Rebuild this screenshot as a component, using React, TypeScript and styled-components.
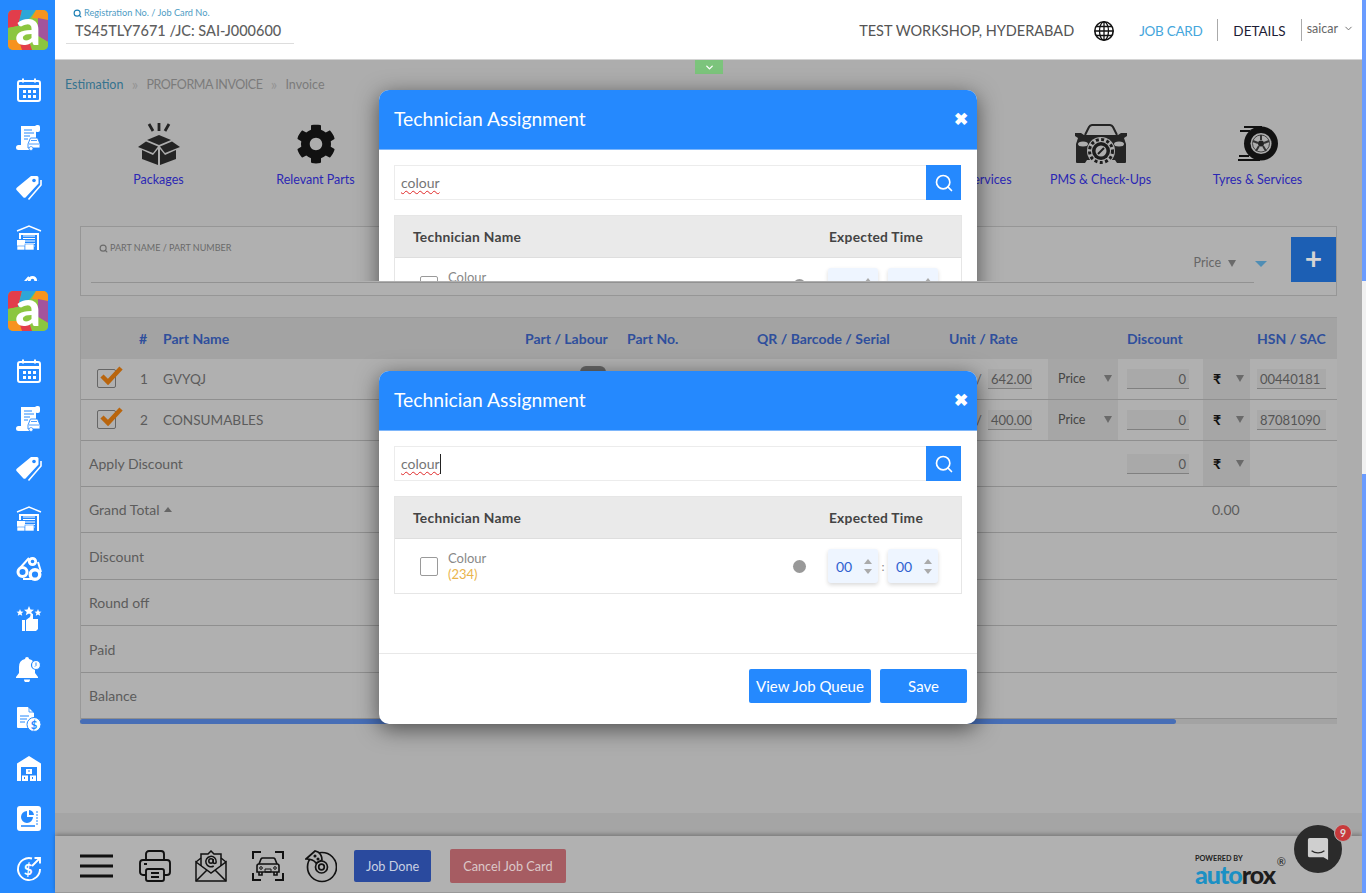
import React from 'react'
import styled, { createGlobalStyle } from 'styled-components'
import { FaCog } from 'react-icons/fa'
import { FiSearch, FiChevronDown } from 'react-icons/fi'

const BLUE = '#2589fe'

const GlobalStyle = createGlobalStyle`
  html, body {
    margin: 0;
    padding: 0;
    height: 893px;
    overflow: hidden;
    background: #adadad;
    font-family: Lato, 'Noto Sans', sans-serif;
  }
  * {
    box-sizing: border-box;
  }
`

const Page = styled.div`
  position: relative;
  display: flex;
  width: 1366px;
  height: 893px;
  overflow: hidden;
`

/* left rail */
const Sidebar = styled.aside`
  width: 55px;
  flex-shrink: 0;
  background: ${BLUE};
  display: flex;
  flex-direction: column;
`

const RailPart = styled.div<{ $height: number }>`
  height: ${({ $height }) => $height}px;
  overflow: hidden;
  padding: 10px 0 0 8px;
`

const RailLogo = styled.div`
  width: 40px;
  height: 40px;
  margin-bottom: 16px;
  border-radius: 5px;
  overflow: hidden;
`

const RailItem = styled.div`
  width: 40px;
  height: 50px;
  margin-left: 1px;
  display: flex;
  align-items: center;
  justify-content: center;
  &:nth-of-type(2) {
    height: 47px;
  }
`

/* main column */
const Main = styled.div`
  flex: 1;
  display: flex;
  flex-direction: column;
  min-width: 0;
`

const Header = styled.header`
  height: 60px;
  flex-shrink: 0;
  background: #fff;
  border-bottom: 1px solid #d4d4d4;
  display: flex;
  align-items: center;
  justify-content: space-between;
  padding: 0 8px 0 11px;
`

const RegBox = styled.div`
  width: 228px;
  height: 36px;
  margin-top: -7px;
  border-bottom: 1px solid #ddd;
`

const RegLabel = styled.div`
  display: flex;
  align-items: center;
  gap: 2px;
  padding-left: 7px;
  font-size: 9.2px;
  line-height: 14px;
  margin-top: -2px;
  color: #4e9cc4;
  white-space: nowrap;
  svg {
    color: #1c7fb4;
    stroke-width: 3;
  }
`

const RegValue = styled.div`
  padding-left: 9px;
  margin-top: 1px;
  font-size: 14.5px;
  line-height: 20px;
  font-weight: 500;
  color: #5f5f5f;
  white-space: nowrap;
`

const HeaderRight = styled.div`
  display: flex;
  align-items: center;
  padding-top: 2px;
`

const Workshop = styled.span`
  font-size: 14.5px;
  color: #555;
  margin-right: 20px;
`

const NavLink = styled.span<{ $active?: boolean }>`
  font-size: 13.5px;
  margin-left: ${({ $active }) => ($active ? 25 : 0)}px;
  letter-spacing: ${({ $active }) => ($active ? -0.3 : 0)}px;
  color: ${({ $active }) => ($active ? '#45a6dc' : '#1d1d35')};
`

const NavDivider = styled.span`
  width: 1px;
  height: 22px;
  background: #aaa;
  margin: -2px 15px 0;
`

const UserName = styled.span`
  display: flex;
  align-items: center;
  gap: 5px;
  font-size: 12.5px;
  color: #666;
  margin-left: -10px;
  margin-top: -5px;
`

const GreenTab = styled.div`
  position: absolute;
  top: 60px;
  left: 695px;
  width: 28px;
  height: 14px;
  background: #7cc47c;
  color: #fff;
  display: flex;
  align-items: center;
  justify-content: center;
`

const Content = styled.main`
  flex: 1;
  padding: 0 25px;
  background: #adadad;
`

const Breadcrumb = styled.nav`
  height: 48px;
  margin-left: -15px;
  display: flex;
  align-items: center;
  font-size: 12.5px;
  color: #7b7b7b;
`

const Crumb = styled.span<{ $link?: boolean; $tight?: boolean }>`
  color: ${({ $link }) => ($link ? '#35738f' : '#7b7b7b')};
  letter-spacing: ${({ $tight }) => ($tight ? -0.45 : 0)}px;
`

const CrumbSep = styled.span`
  width: 23px;
  text-align: center;
  color: #949494;
  font-size: 15px;
  line-height: 14px;
`

const Categories = styled.div`
  margin-top: 15px;
  display: grid;
  grid-template-columns: repeat(8, 157px);
  height: 65px;
`

const Category = styled.div`
  display: flex;
  flex-direction: column;
  align-items: center;
`

const CategoryIcon = styled.div`
  height: 42px;
  display: flex;
  align-items: center;
  justify-content: center;
`

const CategoryLabel = styled.div`
  margin-top: 6px;
  font-size: 12.5px;
  line-height: 18px;
  color: #2b27b4;
  white-space: nowrap;
`

const SearchCard = styled.section`
  margin-top: 38px;
  height: 70px;
  border: 1px solid #969696;
  padding: 10px 0 0 10px;
  display: flex;
  align-items: flex-start;
  background: #b0b0b0;
`

const PartField = styled.div`
  width: 1163px;
  flex-shrink: 0;
  height: 46px;
  border-bottom: 1px solid #929292;
  padding: 5px 0 0 8px;
`

const PartLabel = styled.div`
  display: flex;
  align-items: center;
  gap: 2px;
  font-size: 9px;
  line-height: 12px;
  color: #6a6a6a;
  svg {
    stroke-width: 3;
  }
`

const PriceRow = styled.div`
  display: flex;
  align-items: center;
  justify-content: flex-end;
  gap: 7px;
  margin-top: 1px;
  padding-right: 18px;
  font-size: 12.5px;
  line-height: 16px;
  color: #666;
`

const Triangle = styled.span<{ $color?: string; $up?: boolean; $small?: boolean }>`
  display: inline-block;
  width: 0;
  height: 0;
  border-left: 4px solid transparent;
  border-right: 4px solid transparent;
  ${({ $up, $small, $color }) =>
    $up
      ? `border-bottom: 5px solid ${$color || '#666'};`
      : `border-top: ${$small ? 5 : 7}px solid ${$color || '#6a6a6a'};`}
`

const BlueCaret = styled.span`
  width: 0;
  height: 0;
  margin: 24px 0 0 1px;
  border-left: 6px solid transparent;
  border-right: 6px solid transparent;
  border-top: 6px solid #4f8db4;
`

const PlusButton = styled.div`
  margin-left: auto;
  width: 45px;
  height: 45px;
  background: #1c5fb4;
  color: #d4d4d4;
  font-size: 30px;
  font-weight: 700;
  line-height: 42px;
  text-align: center;
`

const Table = styled.section`
  margin-top: 21px;
  border-left: 1px solid #999;
  background: #b0b0b0;
`

const COLUMNS = '58px 24px 362px 102px 130px 192px 99px 70px 85px 47px 87px'

const HeadRow = styled.div`
  display: grid;
  grid-template-columns: ${COLUMNS};
  height: 42px;
  padding-bottom: 1px;
  align-items: center;
  background: #a3a3a3;
  border-top: 1px solid #9b9b9b;
  font-size: 14px;
  font-weight: 700;
  color: #2f4f9c;
  white-space: nowrap;
`

const HeadCell = styled.div<{ $pad?: number }>`
  padding-left: ${({ $pad }) => $pad || 0}px;
`

const Row = styled.div<{ $height: number }>`
  display: grid;
  grid-template-columns: ${COLUMNS};
  height: ${({ $height }) => $height}px;
  border-bottom: 1px solid #8f8f8f;
  font-size: 14px;
  color: #5c5c5c;
`

const Cell = styled.div<{ $pad?: number; $end?: boolean; $span?: string }>`
  display: flex;
  align-items: center;
  padding-left: ${({ $pad }) => $pad || 0}px;
  justify-content: ${({ $end }) => ($end ? 'flex-end' : 'flex-start')};
  ${({ $span }) => ($span ? `grid-column: ${$span};` : '')}
`

const PartName = styled(Cell)`
  font-size: 13.6px;
`

const SelectCell = styled(Cell)`
  background: #a6a6a6;
  justify-content: space-between;
  padding-right: 6px;
  padding-bottom: 1px;
  font-size: 12.5px;
  color: #444;
`

const Rupee = styled.span`
  font-size: 14px;
  font-weight: 700;
  color: #111;
`

const CheckBox = styled.div`
  position: relative;
  width: 19px;
  height: 19px;
  margin: -1px 0 0 16px;
  border: 1px solid #666;
  border-radius: 2px;
  svg {
    position: absolute;
    left: 2px;
    top: -5px;
  }
`

const RateWrap = styled(Cell)`
  justify-content: flex-end;
  padding-right: 16px;
  gap: 6px;
  font-size: 13px;
`

const UnderInput = styled.div<{ $width: number; $right?: boolean }>`
  width: ${({ $width }) => $width}px;
  height: 20px;
  background: #a9a9a9;
  border-bottom: 1px solid #808080;
  padding: 0 3px;
  line-height: 20px;
  font-size: 13px;
  color: #555;
  text-align: ${({ $right }) => ($right ? 'right' : 'left')};
`

const ToggleBlob = styled.div`
  width: 26px;
  height: 6px;
  margin: 7px 0 0 55px;
  background: #666;
  border-radius: 13px 13px 0 0;
`

const TotalLabel = styled(Cell)`
  padding-left: 8px;
  gap: 4px;
`

const ScrollTrack = styled.div`
  height: 5px;
  background: #a3a3a3;
`

const ScrollThumb = styled.div`
  width: 1096px;
  height: 5px;
  border-radius: 3px;
  background: #476eb6;
`

const Band = styled.div`
  height: 23px;
  flex-shrink: 0;
  background: #a5a5a5;
`

const Footer = styled.footer`
  height: 57px;
  flex-shrink: 0;
  background: #b1b1b1;
  border-bottom: 1px solid #999;
  box-shadow: 0 -2px 4px rgba(0, 0, 0, 0.25);
  display: flex;
  align-items: center;
  padding: 4px 26px 0 25px;
`

const FooterIcon = styled.div<{ $gap: number }>`
  margin-right: ${({ $gap }) => $gap}px;
  display: flex;
`

const FooterButton = styled.div<{ $danger?: boolean }>`
  height: ${({ $danger }) => ($danger ? 34 : 32)}px;
  padding: 0 ${({ $danger }) => ($danger ? 13 : 12)}px;
  margin-right: 19px;
  border-radius: 2px;
  background: ${({ $danger }) => ($danger ? '#a65c62' : '#2a4a9e')};
  color: ${({ $danger }) => ($danger ? '#dcc8c8' : '#c9d0e2')};
  font-size: 12.7px;
  display: flex;
  align-items: center;
  white-space: nowrap;
`

const Powered = styled.div`
  margin-left: auto;
  margin-top: 7px;
  margin-right: 61px;
  position: relative;
  color: #222;
`

const PoweredBy = styled.div`
  font-size: 7.3px;
  line-height: 9px;
  font-weight: 700;
`

const Brand = styled.div`
  font-size: 25px;
  line-height: 23px;
  font-weight: 900;
  letter-spacing: -1px;
  color: #1d1d1d;
`

const BrandBlue = styled.span`
  color: #1b90c4;
`

const Registered = styled.span`
  position: absolute;
  right: -11px;
  top: 1px;
  font-size: 11px;
`

const ChatBubble = styled.div`
  position: absolute;
  left: 1294px;
  top: 825px;
  width: 48px;
  height: 48px;
  border-radius: 50%;
  background: #2b2b2b;
  display: flex;
  align-items: center;
  justify-content: center;
`

const ChatBadge = styled.div`
  position: absolute;
  left: 40px;
  top: -1px;
  width: 18px;
  height: 18px;
  border-radius: 50%;
  border: 1px solid #b1b1b1;
  background: #c83a3c;
  color: #ddd;
  font-size: 10.5px;
  font-weight: 700;
  line-height: 16px;
  text-align: center;
`

const Scrollbar = styled.div`
  width: 4px;
  flex-shrink: 0;
  display: flex;
  flex-direction: column;
`

const ScrollPart = styled.div<{ $height?: number; $light?: boolean }>`
  height: ${({ $height }) => ($height ? `${$height}px` : 'auto')};
  flex: ${({ $height }) => ($height ? 'none' : 1)};
  background: ${({ $light }) => ($light ? '#f1f1f1' : '#6a9cff')};
`

/* dialog */
const TopClip = styled.div`
  position: absolute;
  left: 0;
  top: 0;
  width: 1366px;
  height: 281px;
  overflow: hidden;
`

const Modal = styled.div<{ $top: number }>`
  position: absolute;
  left: 379px;
  top: ${({ $top }) => $top}px;
  width: 598px;
  height: 353px;
  background: #fff;
  border-radius: 10px;
  box-shadow: 0 5px 22px rgba(0, 0, 0, 0.55);
  overflow: hidden;
  display: flex;
  flex-direction: column;
`

const ModalHead = styled.div`
  height: 60px;
  flex-shrink: 0;
  background: ${BLUE};
  border-bottom: 1px solid #7db6fb;
  display: flex;
  align-items: center;
  justify-content: space-between;
  padding: 0 9px 3px 15px;
  color: #fff;
`

const ModalTitle = styled.div`
  font-size: 19.3px;
`

const CloseX = styled.span`
  font-size: 17px;
  font-weight: 900;
`

const ModalBody = styled.div`
  height: 222px;
  flex-shrink: 0;
  padding: 15px 16px 0 15px;
`

const SearchBar = styled.div`
  display: flex;
  height: 35px;
  border: 1px solid #ececec;
  padding-left: 6px;
  align-items: center;
  justify-content: space-between;
`

const SearchText = styled.span<{ $caret?: boolean }>`
  font-size: 14px;
  line-height: 20px;
  color: #757575;
  text-decoration: underline wavy #e02828 1px;
  text-underline-offset: 2px;
  ${({ $caret }) => ($caret ? 'border-right: 1px solid #222;' : '')}
`

const SearchButton = styled.div`
  width: 35px;
  height: 35px;
  margin-right: -1px;
  background: ${BLUE};
  color: #fff;
  display: flex;
  align-items: center;
  justify-content: center;
`

const TechTable = styled.div`
  margin: 15px -1px 0 0;
  border: 1px solid #e6e6e6;
`

const TechHead = styled.div`
  height: 42px;
  padding: 0 38px 0 18px;
  background: #eaeaea;
  border-bottom: 1px solid #dedede;
  display: flex;
  align-items: center;
  justify-content: space-between;
  font-size: 13.8px;
  font-weight: 700;
  letter-spacing: 0.25px;
  color: #444;
`

const TechRow = styled.div`
  height: 54px;
  display: flex;
  align-items: center;
  padding-left: 25px;
`

const TechCheck = styled.div`
  width: 18px;
  height: 19px;
  border: 1px solid #9a9a9a;
  border-radius: 2px;
  margin-right: 10px;
`

const TechName = styled.div`
  flex: 1;
  font-size: 13px;
  line-height: 16px;
  color: #888;
`

const TechCode = styled.div`
  color: #e9b44c;
`

const StatusDot = styled.span`
  width: 13px;
  height: 13px;
  border-radius: 50%;
  background: #999;
  margin-right: 22px;
`

const TimeBox = styled.div`
  width: 50px;
  height: 34px;
  background: #eef5ff;
  border-radius: 3px;
  box-shadow: 0 2px 4px rgba(0, 0, 0, 0.15);
  display: flex;
  align-items: center;
  justify-content: space-between;
  padding: 0 6px 0 8px;
  font-size: 14px;
  color: #2f62d0;
`

const Spin = styled.div`
  display: flex;
  flex-direction: column;
  gap: 5px;
`

const TimeColon = styled.span`
  width: 10px;
  text-align: center;
  font-size: 12px;
  color: #888;
`

const TimeEnd = styled.div`
  width: 23px;
`

const ModalFoot = styled.div`
  flex: 1;
  border-top: 1px solid #e8e8e8;
  display: flex;
  justify-content: flex-end;
  align-items: flex-start;
  gap: 9px;
  padding: 15px 10px 0 0;
`

const ModalButton = styled.div<{ $width: number }>`
  width: ${({ $width }) => $width}px;
  height: 34px;
  background: ${BLUE};
  border-radius: 2px;
  color: #fff;
  font-size: 15px;
  display: flex;
  align-items: center;
  justify-content: center;
`

/* drawings */
const AppLogo = () => (
  <svg width="40" height="40" viewBox="0 0 40 40">
    <rect width="40" height="40" fill="#8cc63f" />
    <polygon points="0,0 14,0 10,16 0,18" fill="#e23d4b" />
    <polygon points="14,0 28,0 22,8 10,16" fill="#2da6d8" />
    <polygon points="28,0 40,0 40,10 24,8" fill="#f7941d" />
    <polygon points="30,8 40,10 40,32 30,26" fill="#a3549c" />
    <polygon points="30,26 40,32 40,40 22,40" fill="#8cc63f" />
    <polygon points="0,18 10,16 12,30 0,30" fill="#8cc63f" />
    <polygon points="0,30 12,30 16,40 0,40" fill="#f7931e" />
    <polygon points="12,34 22,34 24,40 14,40" fill="#e23d4b" />
    <text x="20" y="35" textAnchor="middle" fontFamily="Lato" fontWeight="900" fontSize="50" fill="#fff">a</text>
  </svg>
)

const CalendarIcon = () => (
  <svg width="26" height="26" viewBox="0 0 26 26" fill="none" stroke="#fff" strokeWidth="2">
    <rect x="2" y="4" width="22" height="20" rx="2" />
    <path d="M2 9.500h22" strokeWidth="3" />
    <path d="M7 1.500v4M19 1.500v4" />
    <g fill="#fff" stroke="none">
      <rect x="7" y="13" width="3" height="3" /><rect x="12" y="13" width="3" height="3" /><rect x="17" y="13" width="3" height="3" />
      <rect x="7" y="18" width="3" height="3" /><rect x="12" y="18" width="3" height="3" /><rect x="17" y="18" width="3" height="3" />
    </g>
  </svg>
)

const InvoiceIcon = () => (
  <svg width="26" height="26" viewBox="0 0 26 26">
    <path d="M5 1h15v21H5z" fill="#fff" />
    <rect x="19" y="0" width="5" height="7" rx="2" fill="#fff" />
    <rect x="0" y="20" width="15" height="5" rx="2.500" fill="#fff" />
    <path d="M8 5h8M8 8h10M8 11h6M8 14h4" stroke={BLUE} strokeWidth="1" />
    <path d="M12 19l2-5a1 1 0 0 1 1-1h6a1 1 0 0 1 1 1l2 5v4H12z" fill="#fff" stroke={BLUE} strokeWidth=".9" />
    <path d="M13 19h10M15 15.500h6" stroke={BLUE} strokeWidth=".8" />
    <circle cx="15" cy="23.500" r="2" fill="#fff" stroke={BLUE} strokeWidth=".7" />
  </svg>
)

const TagIcon = () => (
  <svg width="26" height="26" viewBox="0 0 26 26">
    <path d="M15 1h6a1.500 1.500 0 0 1 1.500 1.500v6L10 22a2 2 0 0 1-3 0L1 15.500a2 2 0 0 1 0-3z" fill="#fff" />
    <circle cx="18" cy="5.500" r="1.800" fill={BLUE} />
    <path d="M25 5v5L12.500 24.500" stroke="#fff" strokeWidth="1.600" fill="none" />
  </svg>
)

const WarehouseIcon = () => (
  <svg width="26" height="26" viewBox="0 0 26 26">
    <path d="M1 6l12-5 12 5" stroke="#fff" strokeWidth="1.400" fill="none" />
    <path d="M3 8h20v17h-2V10H5v4H3z" fill="#fff" />
    <path d="M7 11h12M7 13.500h12M7 16h12M7 18.500h12M7 21h12" stroke="#fff" strokeWidth="1" />
    <rect x="1" y="15" width="8" height="6" fill="#fff" />
    <rect x="1" y="21" width="8" height="4" fill="#fff" stroke={BLUE} strokeWidth=".6" />
    <rect x="9" y="19" width="9" height="6" fill="#fff" stroke={BLUE} strokeWidth=".6" />
  </svg>
)

const BeltIcon = () => (
  <svg width="26" height="26" viewBox="0 0 26 26" fill="none">
    <path d="M4 12L13 2M22 6l3 10M7 23h12" stroke="#fff" strokeWidth="2" />
    <circle cx="6.500" cy="16" r="4.500" stroke="#fff" strokeWidth="3" />
    <circle cx="19" cy="18.500" r="4.800" stroke="#fff" strokeWidth="3.400" />
    <circle cx="16.500" cy="5.500" r="3.200" stroke="#fff" strokeWidth="2.800" />
  </svg>
)

const ThumbIcon = () => (
  <svg width="26" height="26" viewBox="0 0 26 26" fill="#fff">
    <polygon points="13,0 14.500,3.500 18,3.800 15.300,6 16.200,9.300 13,7.500 9.800,9.300 10.700,6 8,3.800 11.500,3.500" />
    <polygon points="4,3 5,5.500 7.500,5.700 5.600,7.300 6.200,9.700 4,8.400 1.800,9.700 2.400,7.300 .5,5.700 3,5.500" />
    <polygon points="22,3 23,5.500 25.500,5.700 23.600,7.300 24.200,9.700 22,8.400 19.800,9.700 20.400,7.300 18.500,5.700 21,5.500" />
    <rect x="6" y="14" width="3" height="11" />
    <path d="M10 14l4-3 1-4 2 1v5h5v10l-2 2H10z" />
  </svg>
)

const BellIcon = () => (
  <svg width="26" height="26" viewBox="0 0 26 26">
    <path d="M11 1a2 2 0 0 1 2 2 8 8 0 0 1 6 8v6l3 4v1H0v-1l3-4v-6a8 8 0 0 1 6-8 2 2 0 0 1 2-2z" fill="#fff" />
    <path d="M8 23.500a3 3 0 0 0 6 0" fill="#fff" />
    <circle cx="20" cy="9" r="4.500" fill="#fff" stroke={BLUE} strokeWidth="1.200" />
    <path d="M20 6.500v3l-1 1" stroke={BLUE} strokeWidth="1" fill="none" />
  </svg>
)

const BillIcon = () => (
  <svg width="26" height="26" viewBox="0 0 26 26">
    <path d="M1 2a1 1 0 0 1 1-1h10l6 6v14a1 1 0 0 1-1 1H2a1 1 0 0 1-1-1z" fill="#fff" />
    <path d="M13 1v5h5" stroke={BLUE} strokeWidth=".8" fill="none" />
    <path d="M4 10h9M4 13h7M4 16h5" stroke={BLUE} strokeWidth="1" />
    <circle cx="18" cy="18.500" r="7" fill="#fff" stroke={BLUE} />
    <text x="18" y="22.500" textAnchor="middle" fontSize="11" fontWeight="700" fontFamily="Lato" fill={BLUE}>$</text>
  </svg>
)

const StoreIcon = () => (
  <svg width="26" height="26" viewBox="0 0 26 26">
    <path d="M13 0l12 7.500V25H1V7.500z" fill="#fff" />
    <rect x="5" y="11" width="16" height="14" fill={BLUE} />
    <rect x="10" y="13" width="6" height="5" fill="#fff" />
    <rect x="6" y="19.500" width="6" height="5.500" fill="#fff" />
    <rect x="14" y="19.500" width="6" height="5.500" fill="#fff" />
    <path d="M13 14v2M8.500 21v2M16.500 21v2" stroke={BLUE} />
  </svg>
)

const ReportIcon = () => (
  <svg width="26" height="26" viewBox="0 0 26 26">
    <rect x="1" y="0" width="24" height="25" rx="3" fill="#fff" />
    <path d="M11 5a6 6 0 1 0 6 6h-6z" fill={BLUE} />
    <path d="M13 4a6 6 0 0 1 5 5h-5z" fill={BLUE} />
    <path d="M5 20h14" stroke={BLUE} strokeWidth="1.600" />
    <path d="M20 6h2M20 9h2M20 12h2M20 15h2M20 18h2" stroke={BLUE} />
  </svg>
)

const MoneyIcon = () => (
  <svg width="26" height="26" viewBox="0 0 26 26" fill="none" stroke="#fff" strokeWidth="1.900">
    <path d="M16 2.500A11 11 0 1 0 24 13" />
    <path d="M16 10l8-8M18.500 2H24v5.500" />
    <text x="12" y="18.500" textAnchor="middle" fontSize="15" fontWeight="700" fontFamily="Lato" fill="#fff" stroke="none">$</text>
  </svg>
)

const PackageIcon = () => (
  <svg width="42" height="42" viewBox="0 0 42 42" fill="#242424">
    <path d="M11 1l4 7M21 0v8M31 1l-4 7" stroke="#242424" strokeWidth="2.800" fill="none" />
    <polygon points="21,12 33,17 21,22 9,17" />
    <polygon points="8,18.500 20,23.500 15,30 0,24" />
    <polygon points="34,18.500 22,23.500 27,30 42,24" />
    <polygon points="4,27 15,32 20,26 20,42 4,36" />
    <polygon points="38,27 27,32 22,26 22,42 38,36" />
  </svg>
)

const CarServiceIcon = () => (
  <svg width="52" height="40" viewBox="0 0 52 40">
    <path d="M10 11l4-8a4 4 0 0 1 3-2h18a4 4 0 0 1 3 2l4 8" fill="none" stroke="#242424" strokeWidth="2" />
    <path d="M0 9h6l3 2h34l3-2h6v3l-3 2 2 6v18a1 1 0 0 1-1 1h-8l-2-3H12l-2 3H2a1 1 0 0 1-1-1V20l2-6-3-2z" fill="#242424" />
    <ellipse cx="8" cy="20" rx="5" ry="2.500" fill="#adadad" />
    <ellipse cx="44" cy="20" rx="5" ry="2.500" fill="#adadad" />
    <circle cx="26" cy="27" r="14" fill="#adadad" />
    <circle cx="26" cy="27" r="9" fill="#1d1d1d" />
    <circle cx="26" cy="27" r="11.500" fill="none" stroke="#1d1d1d" strokeWidth="3" strokeDasharray="3 2.400" />
    <circle cx="26" cy="27" r="5.500" fill="#adadad" />
    <path d="M23 30l6-6" stroke="#1d1d1d" strokeWidth="2" />
  </svg>
)

const TyreIcon = () => (
  <svg width="40" height="36" viewBox="0 0 40 36">
    <circle cx="23" cy="17.500" r="17" fill="#111" />
    <path d="M6 1h18M2 5h10M1 30h10M0 34h22" stroke="#111" strokeWidth="1.800" />
    <circle cx="23" cy="17.500" r="10.500" fill="#adadad" />
    <circle cx="23" cy="17.500" r="8.500" fill="none" stroke="#444" />
    <circle cx="23" cy="17.500" r="3" fill="#222" />
    <path d="M23 9v5M15 15l5 2M18 25l3-5M28 25l-3-5M31 15l-5 2" stroke="#333" strokeWidth="2" />
  </svg>
)

const GlobeIcon = () => (
  <svg width="20" height="20" viewBox="0 0 20 20" fill="none" stroke="#111" strokeWidth="1.300">
    <circle cx="10" cy="10" r="9.200" strokeWidth="1.600" />
    <ellipse cx="10" cy="10" rx="4.500" ry="9.200" />
    <path d="M10 1v18M1 10h18M2 5.500h16M2 14.500h16" />
  </svg>
)

const OrangeCheck = () => (
  <svg width="24" height="20" viewBox="0 0 24 20">
    <path d="M2 11l6 6L21 3" fill="none" stroke="#b9650d" strokeWidth="4.500" />
  </svg>
)

const MenuIcon = () => (
  <svg width="33" height="24" viewBox="0 0 33 24" stroke="#111" strokeWidth="3">
    <path d="M0 2h33M0 12h33M0 22h33" />
  </svg>
)

const PrinterIcon = () => (
  <svg width="32" height="32" viewBox="0 0 32 32" fill="none" stroke="#111" strokeWidth="1.900">
    <path d="M7 10V4a3 3 0 0 1 3-3h12a3 3 0 0 1 3 3v6" />
    <path d="M7 25H4a3 3 0 0 1-3-3V13a3 3 0 0 1 3-3h24a3 3 0 0 1 3 3v9a3 3 0 0 1-3 3h-3" />
    <rect x="7" y="19" width="18" height="12" rx="2" />
    <path d="M12 23h8M12 27h8M5 14h3" />
  </svg>
)

const MailIcon = () => (
  <svg width="32" height="32" viewBox="0 0 32 32" fill="none" stroke="#111" strokeWidth="1.500">
    <path d="M1 12l15 11 15-11v19H1z" />
    <path d="M1 31l11-11M31 31L20 20" />
    <path d="M1 12l5-4M31 12l-5-4" />
    <path d="M6 16V4h7l3-3 3 3h7v12" />
    <circle cx="16" cy="11" r="2.200" />
    <path d="M18.200 9v3a1.500 1.500 0 0 0 3 0 5.200 5.200 0 1 0-2.500 4" />
  </svg>
)

const CarScanIcon = () => (
  <svg width="32" height="32" viewBox="0 0 32 32" fill="none" stroke="#111">
    <path d="M1 9V2h8M23 2h8v7M1 23v7h8M23 30h8v-7" strokeWidth="2" />
    <path d="M7 14l2-5a2 2 0 0 1 2-1h10a2 2 0 0 1 2 1l2 5" strokeWidth="1.600" />
    <path d="M5 16a2 2 0 0 1 2-2h18a2 2 0 0 1 2 2v6H5z" strokeWidth="1.600" />
    <path d="M7 22v3h3v-3M22 22v3h3v-3" strokeWidth="1.600" />
    <circle cx="9" cy="18" r="1.300" /><circle cx="23" cy="18" r="1.300" />
    <path d="M13 19h6v3h-6z" />
  </svg>
)

const DiscIcon = () => (
  <svg width="32" height="34" viewBox="0 0 32 34" fill="none" stroke="#111" strokeWidth="1.700">
    <circle cx="17" cy="18" r="14.500" />
    <circle cx="16.500" cy="18" r="6" />
    <circle cx="16.500" cy="18" r="2.800" />
    <path d="M1 10l9-8 3 1c3 2 4 5 4 8l-6 3c-2-3-6-4-10-4z" fill="#b1b1b1" />
    <circle cx="10" cy="7" r=".7" /><circle cx="13" cy="10" r=".7" />
  </svg>
)

const ChatGlyph = () => (
  <svg width="22" height="24" viewBox="0 0 24 26">
    <path d="M3 1h18a2 2 0 0 1 2 2v22l-5-3H3a2 2 0 0 1-2-2V3a2 2 0 0 1 2-2z" fill="#cfcfcf" />
    <path d="M5 15c4 3 10 3 14 0" stroke="#2b2b2b" strokeWidth="1.400" fill="none" />
  </svg>
)

const RAIL_ICONS = [
  CalendarIcon,
  InvoiceIcon,
  TagIcon,
  WarehouseIcon,
  BeltIcon,
  ThumbIcon,
  BellIcon,
  BillIcon,
  StoreIcon,
  ReportIcon,
  MoneyIcon
]

const PARTS = [
  { no: 1, name: 'GVYQJ', rate: '642.00', hsn: '00440181', blob: true },
  { no: 2, name: 'CONSUMABLES', rate: '400.00', hsn: '87081090', blob: false }
]

const TOTALS: { label: string; height: number }[] = [
  { label: 'Discount', height: 47 },
  { label: 'Round off', height: 46 },
  { label: 'Paid', height: 47 },
  { label: 'Balance', height: 46 }
]

function Rail({ height }: { height: number }) {
  return (
    <RailPart $height={height}>
      <RailLogo>
        <AppLogo />
      </RailLogo>
      {RAIL_ICONS.map((Icon, i) => (
        <RailItem key={i}>
          <Icon />
        </RailItem>
      ))}
    </RailPart>
  )
}

function TimeSpinner() {
  return (
    <TimeBox>
      00
      <Spin>
        <Triangle $up $color="#aaa" />
        <Triangle $small $color="#aaa" />
      </Spin>
    </TimeBox>
  )
}

function AssignmentDialog({ top, caret }: { top: number; caret?: boolean }) {
  return (
    <Modal $top={top}>
      <ModalHead>
        <ModalTitle>Technician Assignment</ModalTitle>
        <CloseX>✖</CloseX>
      </ModalHead>
      <ModalBody>
        <SearchBar>
          <SearchText $caret={caret}>colour</SearchText>
          <SearchButton>
            <FiSearch size={20} strokeWidth={2} />
          </SearchButton>
        </SearchBar>
        <TechTable>
          <TechHead>
            <span>Technician Name</span>
            <span>Expected Time</span>
          </TechHead>
          <TechRow>
            <TechCheck />
            <TechName>
              Colour
              <TechCode>(234)</TechCode>
            </TechName>
            <StatusDot />
            <TimeSpinner />
            <TimeColon>:</TimeColon>
            <TimeSpinner />
            <TimeEnd />
          </TechRow>
        </TechTable>
      </ModalBody>
      <ModalFoot>
        <ModalButton $width={122}>View Job Queue</ModalButton>
        <ModalButton $width={87}>Save</ModalButton>
      </ModalFoot>
    </Modal>
  )
}

export default function App() {
  return (
    <Page>
      <GlobalStyle />
      <Sidebar>
        <Rail height={281} />
        <Rail height={612} />
      </Sidebar>

      <Main>
        <Header>
          <RegBox>
            <RegLabel>
              <FiSearch size={9} />
              Registration No. / Job Card No.
            </RegLabel>
            <RegValue>TS45TLY7671 /JC: SAI-J000600</RegValue>
          </RegBox>
          <HeaderRight>
            <Workshop>TEST WORKSHOP, HYDERABAD</Workshop>
            <GlobeIcon />
            <NavLink $active>JOB CARD</NavLink>
            <NavDivider />
            <NavLink>DETAILS</NavLink>
            <NavDivider />
            <UserName>
              saicar
              <FiChevronDown size={11} />
            </UserName>
          </HeaderRight>
        </Header>

        <Content>
          <Breadcrumb>
            <Crumb $link>Estimation</Crumb>
            <CrumbSep>»</CrumbSep>
            <Crumb $tight>PROFORMA INVOICE</Crumb>
            <CrumbSep>»</CrumbSep>
            <Crumb>Invoice</Crumb>
          </Breadcrumb>

          <Categories>
            <Category>
              <CategoryIcon>
                <PackageIcon />
              </CategoryIcon>
              <CategoryLabel>Packages</CategoryLabel>
            </Category>
            <Category>
              <CategoryIcon>
                <FaCog size={40} color="#111" />
              </CategoryIcon>
              <CategoryLabel>Relevant Parts</CategoryLabel>
            </Category>
            <Category />
            <Category />
            <Category />
            <Category>
              <CategoryIcon />
              <CategoryLabel>Repairs &amp; Other Services</CategoryLabel>
            </Category>
            <Category>
              <CategoryIcon>
                <CarServiceIcon />
              </CategoryIcon>
              <CategoryLabel>PMS &amp; Check-Ups</CategoryLabel>
            </Category>
            <Category>
              <CategoryIcon>
                <TyreIcon />
              </CategoryIcon>
              <CategoryLabel>Tyres &amp; Services</CategoryLabel>
            </Category>
          </Categories>

          <SearchCard>
            <PartField>
              <PartLabel>
                <FiSearch size={9} />
                PART NAME / PART NUMBER
              </PartLabel>
              <PriceRow>
                Price
                <Triangle />
              </PriceRow>
            </PartField>
            <BlueCaret />
            <PlusButton>+</PlusButton>
          </SearchCard>

          <Table>
            <HeadRow>
              <HeadCell />
              <HeadCell>#</HeadCell>
              <HeadCell>Part Name</HeadCell>
              <HeadCell>Part / Labour</HeadCell>
              <HeadCell>Part No.</HeadCell>
              <HeadCell>QR / Barcode / Serial</HeadCell>
              <HeadCell>Unit / Rate</HeadCell>
              <HeadCell />
              <HeadCell $pad={9}>Discount</HeadCell>
              <HeadCell />
              <HeadCell $pad={7}>HSN / SAC</HeadCell>
            </HeadRow>

            {PARTS.map(part => (
              <Row key={part.no} $height={41}>
                <Cell>
                  <CheckBox>
                    <OrangeCheck />
                  </CheckBox>
                </Cell>
                <PartName $pad={1}>{part.no}</PartName>
                <PartName>{part.name}</PartName>
                <div>{part.blob && <ToggleBlob />}</div>
                <Cell />
                <Cell />
                <RateWrap>
                  /<UnderInput $width={44}>{part.rate}</UnderInput>
                </RateWrap>
                <SelectCell $pad={10}>
                  Price
                  <Triangle />
                </SelectCell>
                <Cell $pad={9}>
                  <UnderInput $width={62} $right>
                    0
                  </UnderInput>
                </Cell>
                <SelectCell $pad={10}>
                  <Rupee>₹</Rupee>
                  <Triangle />
                </SelectCell>
                <Cell $pad={7}>
                  <UnderInput $width={69}>{part.hsn}</UnderInput>
                </Cell>
              </Row>
            ))}

            <Row $height={46}>
              <TotalLabel $span="1 / 8">Apply Discount</TotalLabel>
              <Cell />
              <Cell $pad={9}>
                <UnderInput $width={62} $right>
                  0
                </UnderInput>
              </Cell>
              <SelectCell $pad={10}>
                <Rupee>₹</Rupee>
                <Triangle />
              </SelectCell>
              <Cell />
            </Row>
            <Row $height={46}>
              <TotalLabel $span="1 / 10">
                Grand Total
                <Triangle $up />
              </TotalLabel>
              <Cell $pad={9} $span="10 / 12">
                0.00
              </Cell>
            </Row>
            {TOTALS.map(total => (
              <Row key={total.label} $height={total.height}>
                <TotalLabel $span="1 / 12">{total.label}</TotalLabel>
              </Row>
            ))}
          </Table>
          <ScrollTrack>
            <ScrollThumb />
          </ScrollTrack>
        </Content>

        <Band />
        <Footer>
          <FooterIcon $gap={26}>
            <MenuIcon />
          </FooterIcon>
          <FooterIcon $gap={24}>
            <PrinterIcon />
          </FooterIcon>
          <FooterIcon $gap={25}>
            <MailIcon />
          </FooterIcon>
          <FooterIcon $gap={21}>
            <CarScanIcon />
          </FooterIcon>
          <FooterIcon $gap={17}>
            <DiscIcon />
          </FooterIcon>
          <FooterButton>Job Done</FooterButton>
          <FooterButton $danger>Cancel Job Card</FooterButton>
          <Powered>
            <PoweredBy>POWERED BY</PoweredBy>
            <Brand>
              <BrandBlue>auto</BrandBlue>rox
            </Brand>
            <Registered>®</Registered>
          </Powered>
        </Footer>
      </Main>

      <Scrollbar>
        <ScrollPart $height={281} />
        <ScrollPart $height={193} $light />
        <ScrollPart />
      </Scrollbar>

      <GreenTab>
        <FiChevronDown size={11} strokeWidth={3} />
      </GreenTab>

      <TopClip>
        <AssignmentDialog top={90} />
      </TopClip>
      <AssignmentDialog top={371} caret />

      <ChatBubble>
        <ChatGlyph />
        <ChatBadge>9</ChatBadge>
      </ChatBubble>
    </Page>
  )
}
